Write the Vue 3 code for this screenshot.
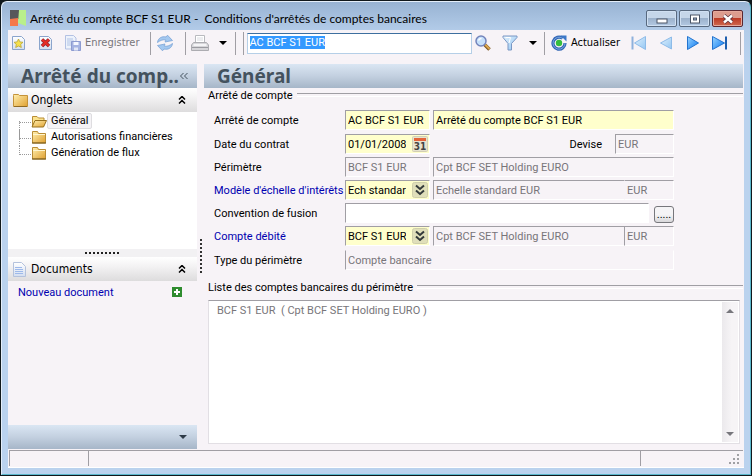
<script setup>
import { onMounted, ref } from 'vue'

const search = ref('AC BCF S1 EUR')
const searchBox = ref(null)
const code = ref('AC BCF S1 EUR')
const name = ref('Arrêté du compte BCF S1 EUR')
const date = ref('01/01/2008')
const scale = ref('Ech standard')
const fusion = ref('')
const debit = ref('BCF S1 EUR')
const accounts = ['BCF S1 EUR  ( Cpt BCF SET Holding EURO )']
const tabs = ['Général', 'Autorisations financières', 'Génération de flux']
const current = ref(0)

onMounted(() => {
  searchBox.value.focus()
  searchBox.value.select()
})
</script>

<template>
  <div class="desktop">
    <svg class="defs" width="0" height="0" aria-hidden="true">
      <defs>
        <linearGradient id="gFolder" x1="0" y1="0" x2="1" y2="1">
          <stop offset="0" stop-color="#fff0b0" /><stop offset="1" stop-color="#e0a030" />
        </linearGradient>
        <linearGradient id="gPage" x1="0" y1="0" x2="0" y2="1">
          <stop offset="0" stop-color="#ffffff" /><stop offset="1" stop-color="#d3def0" />
        </linearGradient>
        <linearGradient id="gBlue" x1="0" y1="0" x2="1" y2="1">
          <stop offset="0" stop-color="#9ad4ff" /><stop offset="1" stop-color="#0b78f0" />
        </linearGradient>
        <linearGradient id="gPale" x1="0" y1="0" x2="1" y2="1">
          <stop offset="0" stop-color="#e2f1fc" /><stop offset="1" stop-color="#93c6f3" />
        </linearGradient>
        <symbol id="folder" viewBox="0 0 16 14">
          <path d="M1.500 1.500h5l1 2h7v9.500h-13z" fill="url(#gFolder)" stroke="#b98d35" />
          <path d="M2 4.500h12" stroke="#fff6cf" />
          <path d="M1 13h14" stroke="#6f5216" />
        </symbol>
        <symbol id="chevrons" viewBox="0 0 8 8">
          <path d="M1 3.500l3-3 3 3M1 7.500l3-3 3 3" fill="none" stroke="currentColor" stroke-width="1.500" />
        </symbol>
        <symbol id="down" viewBox="0 0 8 4"><path d="M0 0h8l-4 4z" fill="currentColor" /></symbol>
        <symbol id="drop" viewBox="0 0 16 16">
          <rect x=".5" y=".5" width="15" height="15" rx="2" fill="#e0dfba" stroke="#cfcfaa" />
          <path d="M4 3.500l4 3.500 4-3.500M4 8.500l4 3.500 4-3.500" fill="none" stroke="#333a3a" stroke-width="2" />
        </symbol>
      </defs>
    </svg>

    <main class="window">
      <header class="titlebar">
        <svg class="logo" width="16" height="16" viewBox="0 0 16 16">
          <path d="M0 0h9v9h-9z" fill="#57585a" /><path d="M0 9l8-1v8h-8z" fill="#f4784a" /><path d="M9 0h7v16l-8-3z" fill="#b9ef8b" />
        </svg>
        <h1>Arrêté du compte BCF S1 EUR -&nbsp; Conditions d'arrêtés de comptes bancaires</h1>
        <div class="caption">
          <button type="button" aria-label="Réduire"><svg width="12" height="10" viewBox="0 0 12 10"><rect x="1" y="5" width="10" height="4" fill="#fff" stroke="#4a5566" /></svg></button>
          <button type="button" aria-label="Agrandir"><svg width="12" height="10" viewBox="0 0 12 10"><rect x="1.500" y="1" width="9" height="8" fill="#fff" stroke="#4a5566" /><rect x="4.500" y="4" width="3" height="2" fill="#9eb6d3" stroke="#4a5566" /></svg></button>
          <button type="button" class="close" aria-label="Fermer"><svg width="12" height="10" viewBox="0 0 12 10"><path d="M2 1.500l8 7M10 1.500l-8 7" stroke="#5b3440" stroke-width="4" /><path d="M2 1.500l8 7M10 1.500l-8 7" stroke="#fff" stroke-width="2.400" /></svg></button>
        </div>
      </header>

      <div class="client">
        <div class="toolbar" role="toolbar">
          <div class="group first">
            <button type="button" aria-label="Nouveau"><svg width="16" height="16" viewBox="0 0 16 16"><path d="M1.500 1.500h9l3 3v10h-12z" fill="url(#gPage)" stroke="#8aa4cc" /><path d="M7.500 4l1.400 2.900 3.100.400-2.300 2.100.600 3.100-2.800-1.500-2.800 1.500.600-3.100-2.300-2.100 3.100-.400z" fill="#f5e04c" stroke="#b7a535" stroke-width=".8" /></svg></button>
            <button type="button" aria-label="Supprimer"><svg width="16" height="16" viewBox="0 0 16 16"><path d="M1.500 1.500h9l3 3v10h-12z" fill="url(#gPage)" stroke="#8aa4cc" /><path d="M4 4.500l7 6.500M11 4.500l-7 6.500" stroke="#8e2430" stroke-width="3.600" /><path d="M4 4.500l7 6.500M11 4.500l-7 6.500" stroke="#e62c25" stroke-width="2.200" /></svg></button>
            <button type="button" class="save" disabled><svg width="16" height="16" viewBox="0 0 16 16"><path d="M.5.500h8l2.500 2.500v11h-10.500z" fill="#edf2fb" stroke="#b3c1e3" /><path d="M2 4h6M2 6h7M2 8h4M2 10h4" stroke="#b0c3e6" /><path d="M6.500 6.500h9v9h-9z" fill="#a5b3e2" stroke="#8d9bd0" /><path d="M8.500 7h5v3h-5z" fill="#f5f7ff" /><path d="M9 12.500h4v3h-4z" fill="#e2e7f7" /></svg><span>Enregistrer</span></button>
          </div>
          <div class="group">
            <button type="button" aria-label="Synchroniser"><svg width="16" height="16" viewBox="0 0 16 16"><path d="M.5 7.500c.5-4.500 4.500-6.500 8.500-5.500l1.500-1.800 5 5.300-7.500 1.500 1-2c-3-.8-5.500.3-8.500 2.500z" fill="#a3c8f0" stroke="#7ba3d6" stroke-width=".8" /><path d="M15.500 8.500c-.5 4.500-4.500 6.500-8.500 5.500l-1.500 1.800-5-5.300 7.500-1.500-1 2c3 .8 5.500-.3 8.500-2.500z" fill="#a3c8f0" stroke="#7ba3d6" stroke-width=".8" /></svg></button>
          </div>
          <div class="group print">
            <button type="button" aria-label="Imprimer"><svg width="18" height="16" viewBox="0 0 18 16"><path d="M4.500.5h9v7h-9z" fill="#fff" stroke="#b8babf" /><path d="M6 3h6M6 5h6" stroke="#d8dae0" /><path d="M2.500 7.500h13l2 2.500v5.500h-17v-5.500z" fill="#d6d5d9" stroke="#acacb1" /><path d="M1 12.500h16" stroke="#9a9aa0" /><path d="M2.500 10h13" stroke="#f4f4f6" stroke-width="2" /></svg></button>
            <button type="button" aria-label="Options d'impression"><svg width="8" height="4"><use href="#down" /></svg></button>
          </div>
          <div class="group search">
            <input ref="searchBox" v-model="search" type="text" aria-label="Rechercher" spellcheck="false" />
            <button type="button" aria-label="Chercher"><svg width="16" height="16" viewBox="0 0 16 16"><path d="M9.500 9.500l5 5" stroke="#7d5722" stroke-width="3.600" /><path d="M10 9.500l4.500 4.500" stroke="#dba64d" stroke-width="2" /><circle cx="6" cy="6" r="5" fill="#c5e0fb" stroke="#7384bb" stroke-width="1.500" /><path d="M3.500 5.500c.5-1.500 1.500-2 3-2" fill="none" stroke="#fff" stroke-width="1.500" /></svg></button>
            <button type="button" class="filter" aria-label="Filtrer"><svg width="16" height="16" viewBox="0 0 16 16"><path d="M1 1h14v1.500l-5.500 6v6.500h-3.500v-6.500l-5-6z" fill="url(#gPale)" stroke="#7b97c4" /><path d="M3.500 2.500h5l-1.500 5.500" fill="none" stroke="#fff" /></svg></button>
            <button type="button" class="filter" aria-label="Options de filtre"><svg width="8" height="4"><use href="#down" /></svg></button>
          </div>
          <div class="group nav">
            <button type="button" class="update"><svg width="16" height="16" viewBox="0 0 16 16"><path d="M11.500 3.300a6 6 0 1 0 2.500 4.700" fill="none" stroke="#3467b5" stroke-width="3.200" /><path d="M11.500 3.300a6 6 0 1 0 2.500 4.700" fill="none" stroke="#79a7e2" stroke-width="1" /><path d="M9.500.5h6v6z" fill="#3d78c8" /><circle cx="8" cy="8" r="3.200" fill="#35bd3d" /></svg><span>Actualiser</span></button>
            <button type="button" aria-label="Premier"><svg width="16" height="14" viewBox="0 0 16 14"><path d="M1.500.5v13" stroke="#8eb1dc" stroke-width="2" /><path d="M14.500.5v13l-11-6.500z" fill="url(#gPale)" stroke="#8ebbe8" /></svg></button>
            <button type="button" aria-label="Précédent"><svg width="16" height="14" viewBox="0 0 16 14"><path d="M13.500 1v12l-11-6z" fill="url(#gPale)" stroke="#8ebbe8" /></svg></button>
            <button type="button" aria-label="Suivant"><svg width="16" height="14" viewBox="0 0 16 14"><path d="M2.500.5v13l11-6.500z" fill="url(#gBlue)" stroke="#2373cf" /></svg></button>
            <button type="button" aria-label="Dernier"><svg width="16" height="14" viewBox="0 0 16 14"><path d="M.5.5v13l12-6.500z" fill="url(#gBlue)" stroke="#2373cf" /><path d="M14 .5v13" stroke="#1f5fae" stroke-width="2" /></svg></button>
          </div>
        </div>

        <div class="panes">
          <aside class="side">
            <div class="band"><h2>Arrêté du comp..</h2><button type="button" aria-label="Replier"><svg width="8" height="8" viewBox="0 0 8 8"><path d="M3.500 1l-3 3 3 3M7.500 1l-3 3 3 3" fill="none" stroke="#45535e" /></svg></button></div>
            <div class="section"><svg width="15" height="14" viewBox="0 0 15 14"><path d="M.5 2.500v-1h5l1 1h8v11h-14z" fill="url(#gFolder)" stroke="#c4933a" /><path d="M1 13.500h13" stroke="#8f6a24" /></svg><h3 class="head">Onglets</h3><button type="button" aria-label="Replier Onglets"><svg width="8" height="8"><use href="#chevrons" /></svg></button></div>
            <nav class="tree">
              <a v-for="(tab, i) in tabs" :key="tab" href="#" :class="{ on: i === current }" @click.prevent="current = i">
                <svg v-if="i === current" width="16" height="14" viewBox="0 0 16 14"><path d="M1.500 12.500v-10h4.500l1.500 1.500h5.500v3" fill="#fbe38e" stroke="#b98d35" /><path d="M1 13l3-6.500h11.500l-3 6.500z" fill="url(#gFolder)" stroke="#97711f" /></svg>
                <svg v-else width="16" height="14"><use href="#folder" /></svg>
                <span>{{ tab }}</span>
              </a>
            </nav>
            <div class="grip"></div>
            <div class="section"><svg width="13" height="15" viewBox="0 0 13 15"><path d="M.5.500h8l4 4v10h-12z" fill="url(#gPage)" stroke="#b4c2dc" /><path d="M2 5.500h7M2 7.500h8M2 9.500h8M2 11.500h8" stroke="#9db9ea" /></svg><h3 class="docs">Documents</h3><button type="button" aria-label="Replier Documents"><svg width="8" height="8"><use href="#chevrons" /></svg></button></div>
            <div class="documents">
              <a href="#" @click.prevent>Nouveau document</a>
              <button type="button" aria-label="Ajouter un document"><svg width="10" height="10" viewBox="0 0 10 10"><rect width="10" height="10" fill="#2f8c2f" /><path d="M5 2v6M2 5h6" stroke="#fff" stroke-width="2" /></svg></button>
            </div>
            <div class="band foot"><button type="button" aria-label="Plus"><svg width="8" height="4"><use href="#down" /></svg></button></div>
          </aside>
          <div class="splitter"></div>

          <section class="content">
            <div class="band"><h2>Général</h2></div>
            <h4 class="legend">Arrêté de compte</h4>
            <form class="form" @submit.prevent>
              <label for="code">Arrêté de compte</label>
              <input id="code" v-model="code" class="req" type="text" />
              <input v-model="name" class="req" type="text" aria-label="Libellé" />

              <label for="date">Date du contrat</label>
              <div class="combo"><input id="date" v-model="date" class="req" type="text" /><button type="button" aria-label="Calendrier"><svg width="16" height="16" viewBox="0 0 16 16"><rect x=".5" y=".5" width="15" height="15" rx="1" fill="#e6e2cf" stroke="#d2cfb4" /><rect x="2" y="2" width="12" height="3" fill="#e4643a" /><text x="8" y="14" text-anchor="middle" class="day">31</text></svg></button></div>
              <div class="currency"><label for="devise">Devise</label><input id="devise" value="EUR" type="text" readonly /></div>

              <label for="perimetre">Périmètre</label>
              <input id="perimetre" value="BCF S1 EUR" type="text" readonly />
              <input value="Cpt BCF SET Holding EURO" type="text" readonly aria-label="Libellé du périmètre" />

              <label for="modele" class="link">Modèle d'échelle d'intérêts</label>
              <div class="combo"><input id="modele" v-model="scale" class="req" type="text" /><button type="button" aria-label="Choisir un modèle"><svg width="16" height="16"><use href="#drop" /></svg></button></div>
              <div class="pair"><input value="Echelle standard EUR" type="text" readonly aria-label="Libellé du modèle" /><input class="cur plain" value="EUR" type="text" readonly aria-label="Devise du modèle" /></div>

              <label for="fusion">Convention de fusion</label>
              <div class="wide"><input id="fusion" v-model="fusion" class="open" type="text" /><button type="button" class="more" aria-label="Parcourir">.....</button></div>

              <label for="debit" class="link">Compte débité</label>
              <div class="combo"><input id="debit" v-model="debit" class="req" type="text" /><button type="button" aria-label="Choisir un compte"><svg width="16" height="16"><use href="#drop" /></svg></button></div>
              <div class="pair"><input value="Cpt BCF SET Holding EURO" type="text" readonly aria-label="Libellé du compte" /><input class="cur" value="EUR" type="text" readonly aria-label="Devise du compte" /></div>

              <label for="type">Type du périmètre</label>
              <input id="type" class="span type" value="Compte bancaire" type="text" readonly />
            </form>
            <h4 class="legend">Liste des comptes bancaires du périmètre</h4>
            <div class="list">
              <ul><li v-for="a in accounts" :key="a">{{ a }}</li></ul>
              <div class="scroll">
                <button type="button" aria-label="Défiler vers le haut"><svg width="8" height="4" viewBox="0 0 8 4"><path d="M0 4h8l-4-4z" fill="#77777c" /></svg></button>
                <button type="button" aria-label="Défiler vers le bas"><svg width="8" height="4"><use href="#down" /></svg></button>
              </div>
            </div>
          </section>
        </div>

        <footer class="status">
          <span class="s1"></span><span class="s2"></span>
          <span class="s3"><svg width="12" height="12" viewBox="0 0 12 12"><path d="M9 1h2M9 5h2M5 5h2M9 9h2M5 9h2M1 9h2" stroke="#a0a0a4" stroke-width="2" /></svg></span>
        </footer>
      </div>
    </main>
  </div>
</template>

<style>
body {
  margin: 0;
  background: #101418;
}
</style>

<style scoped>
* {
  box-sizing: border-box;
}
.desktop {
  display: flex;
  min-height: 100vh;
  padding: 1px;
  background: #10181c;
  font: 11px/14px Roboto, "Liberation Sans", Arial, sans-serif;
  color: #000;
}
.defs {
  position: absolute;
}
svg {
  display: block;
  flex: none;
}
h1, h2, h3, h4, ul {
  margin: 0;
  padding: 0;
  font-weight: normal;
  list-style: none;
}
h4 {
  font-size: 11px;
}
button {
  display: flex;
  align-items: center;
  flex: none;
  padding: 0;
  border: 0;
  background: none;
  color: inherit;
  font: inherit;
}
a {
  color: inherit;
  text-decoration: none;
}
input {
  min-width: 0;
  outline: 0;
  font: inherit;
}
.window {
  display: flex;
  flex-direction: column;
  flex: 1;
  min-width: 0;
  padding: 0 6px 6px;
  border: 1px solid #e4eefa;
  border-right-color: #5ab7cb;
  border-bottom-color: #5ab7cb;
  border-radius: 6px 6px 0 0;
  background: linear-gradient(#98b3d3, #b2cbe8 28px, #bad2ee 60px);
}
.titlebar {
  display: flex;
  gap: 4px;
  height: 28px;
  padding: 8px 1px 0 2px;
}
.titlebar h1 {
  flex: 1;
  font: 12px/18px Lato, "Liberation Sans", sans-serif;
  white-space: nowrap;
}
.caption {
  display: flex;
  gap: 2px;
}
.caption button {
  justify-content: center;
  width: 31px;
  height: 17px;
  border: 1px solid #58697f;
  border-radius: 2px;
  background: linear-gradient(#c5d6e9 45%, #9cb2cc 50%, #b3c9e3);
  box-shadow: inset 0 0 0 1px #d0e0f2;
}
.caption .close {
  border-color: #5b2730;
  background: linear-gradient(#dd9c8e 45%, #bd3b26 50%, #cf6a50);
  box-shadow: inset 0 0 0 1px #e5a99c;
}
.client {
  display: flex;
  flex-direction: column;
  flex: 1;
  background: #f7f3f7;
}
.toolbar {
  display: flex;
  align-items: center;
  height: 34px;
  padding: 0 3px 8px;
  font: 11px/14px "DejaVu Sans Condensed", "DejaVu Sans", sans-serif;
}
.group {
  display: flex;
  align-items: center;
  height: 23px;
  padding: 0 12px 0 6px;
  border-right: 1px solid #a09ea4;
}
.group.first {
  gap: 11px;
  padding: 0 10px 0 0;
}
.save, .update {
  gap: 4px;
}
.save {
  color: #77757a;
}
.print {
  gap: 10px;
  padding: 0 8px 0 5px;
}
.search {
  flex: 1;
  min-width: 0;
  gap: 3px;
  margin-left: 7px;
  padding: 0 7px 0 3px;
  border-left: 1px solid #a09ea4;
}
.search input {
  flex: 1;
  height: 21px;
  padding: 0 2px 2px;
  border: 1px solid #b5cfe7;
  border-top-color: #3d6f9f;
  background: #fff;
  font: 11px/14px Roboto, "Liberation Sans", Arial, sans-serif;
}
.search input::selection {
  background: #3399ff;
  color: #fff;
}
.filter {
  margin-left: 8px;
}
.nav {
  gap: 11px;
}
.panes {
  display: flex;
  flex: 1;
}
.side {
  display: flex;
  flex-direction: column;
  width: 189px;
}
.band {
  display: flex;
  align-items: center;
  height: 24px;
  padding: 0 9px 0 13px;
  background: linear-gradient(#dae6f3, #c3d0e0 50%, #a6b6c8);
}
.band h2 {
  flex: 1;
  color: #44525e;
  font: bold 19px/24px "Noto Sans", "DejaVu Sans Condensed", sans-serif;
  white-space: nowrap;
}
.section {
  display: flex;
  align-items: center;
  gap: 3px;
  height: 24px;
  padding: 0 11px 0 5px;
  background: linear-gradient(#fff, #f3f2f3 40%, #dddcdd);
}
.section h3 {
  flex: 1;
  font: 12px/20px "DejaVu Sans Condensed", "DejaVu Sans", sans-serif;
}
.section .docs {
  padding-left: 2px;
}
.tree {
  flex: 1;
  padding: 1px 0 0 11px;
  background: #fff;
}
.tree a {
  display: flex;
  align-items: center;
  height: 16px;
}
.tree a::before {
  content: "";
  align-self: flex-start;
  width: 11px;
  height: 9px;
  border-bottom: 1px dotted #999;
  border-left: 1px dotted #999;
}
.tree a:first-child::before {
  border-left-color: transparent;
}
.tree a:not(:last-child) {
  background: repeating-linear-gradient(#999 0 1px, #fff 1px 2px) 0 0 / 1px 100% no-repeat;
}
.tree a:first-child {
  background-position: 0 8px;
}
.tree span {
  padding: 0 4px;
  line-height: 16px;
}
.tree .on span {
  border: 1px solid #dedde0;
  border-radius: 2px;
  background: #f5f3f6;
  line-height: 14px;
  padding: 0 3px;
}
.grip {
  height: 8px;
  background: repeating-linear-gradient(90deg, #222 0 2px, transparent 2px 4px) center 3px / 35px 2px no-repeat, #f2f1f3;
}
.documents {
  display: flex;
  justify-content: space-between;
  align-items: flex-start;
  height: 144px;
  padding: 5px 15px 0 10px;
}
.documents a {
  color: #0000b0;
}
.documents button {
  height: 12px;
}
.foot {
  justify-content: flex-end;
  padding-right: 10px;
  color: #2e3b48;
}
.splitter {
  width: 7px;
  background: repeating-linear-gradient(#333 0 2px, transparent 2px 4px) 3px 175px / 2px 35px no-repeat;
}
.content {
  display: flex;
  flex-direction: column;
  flex: 1;
  min-width: 0;
  padding-right: 1px;
}
.legend {
  display: flex;
  align-items: center;
  gap: 4px;
  padding: 1px 0 0 4px;
}
.legend::after {
  content: "";
  flex: 1;
  height: 2px;
  margin-bottom: 2px;
  border-top: 1px solid #a09ea4;
  border-bottom: 1px solid #fff;
}
.form {
  display: grid;
  grid-template-columns: 128px 85px minmax(0, 1fr);
  grid-template-rows: 21px 20px 20px 20px 20px 21px 20px;
  gap: 3px;
  align-items: start;
  padding: 7px 69px 10px 10px;
}
.form label {
  line-height: 22px;
  white-space: nowrap;
}
.link {
  color: #0000b0;
}
.form input {
  width: 100%;
  height: 20px;
  padding: 1px 2px 0;
  border: 1px solid #fff;
  border-top-color: #a09ea4;
  border-left-color: #a09ea4;
  background: #f7f3f7;
  color: #77757a;
}
.form .req {
  background: #ffffcc;
  color: #000;
}
.form .open {
  background: #fff;
  color: #000;
}
.combo {
  display: grid;
  grid-template-columns: minmax(0, 1fr) 17px;
  gap: 6px;
  align-items: center;
  height: 20px;
  border: 1px solid #fff;
  border-top-color: #a09ea4;
  border-left-color: #a09ea4;
  background: #ffffcc;
}
.form .combo input {
  height: 18px;
  padding-right: 0;
  border: 0;
}
.day {
  fill: #444;
  font: bold 10px "DejaVu Sans Condensed", sans-serif;
}
.currency {
  display: flex;
  justify-content: flex-end;
  height: 20px;
  gap: 13px;
}
.form .currency input {
  width: 59px;
}
.pair {
  display: flex;
}
.form .cur {
  width: 50px;
}
.form .plain {
  border-left-color: #f7f3f7;
}
.form .pair input:first-child {
  flex: 1;
  border-right: 0;
}
.wide, .span {
  grid-column: span 2;
}
.wide {
  display: flex;
  gap: 5px;
  height: 20px;
}
.more {
  justify-content: center;
  align-items: flex-end;
  align-self: flex-end;
  width: 20px;
  height: 17px;
  border: 1px solid #77777c;
  border-radius: 3px;
  background: linear-gradient(#f5f4f6 50%, #d8d7da);
}
.form .type {
  border-top-color: #f7f3f7;
}
.list {
  display: flex;
  flex: 1;
  margin: 5px 3px 5px 4px;
  border: 1px solid #e2dfe4;
  border-top-color: #a09ea4;
  background: #fff;
}
.list ul {
  flex: 1;
  padding: 3px 8px;
  color: #77757a;
  white-space: pre;
}
.scroll {
  display: flex;
  flex-direction: column;
  justify-content: space-between;
  width: 16px;
  margin: 1px;
  padding: 7px 4px 6px;
  background: linear-gradient(90deg, #ebe9ec, #f6f4f6 60%);
  color: #77777c;
}
.status {
  display: flex;
  height: 19px;
  padding: 1px;
  border-bottom: 1px solid #fff;
}
.status span {
  border-top: 1px solid #a09ea4;
  border-left: 1px solid #a09ea4;
}
.s1 {
  width: 79px;
}
.s2 {
  flex: 1;
}
.s3 {
  display: flex;
  justify-content: flex-end;
  align-items: flex-end;
  width: 103px;
  padding-right: 3px;
}
</style>
